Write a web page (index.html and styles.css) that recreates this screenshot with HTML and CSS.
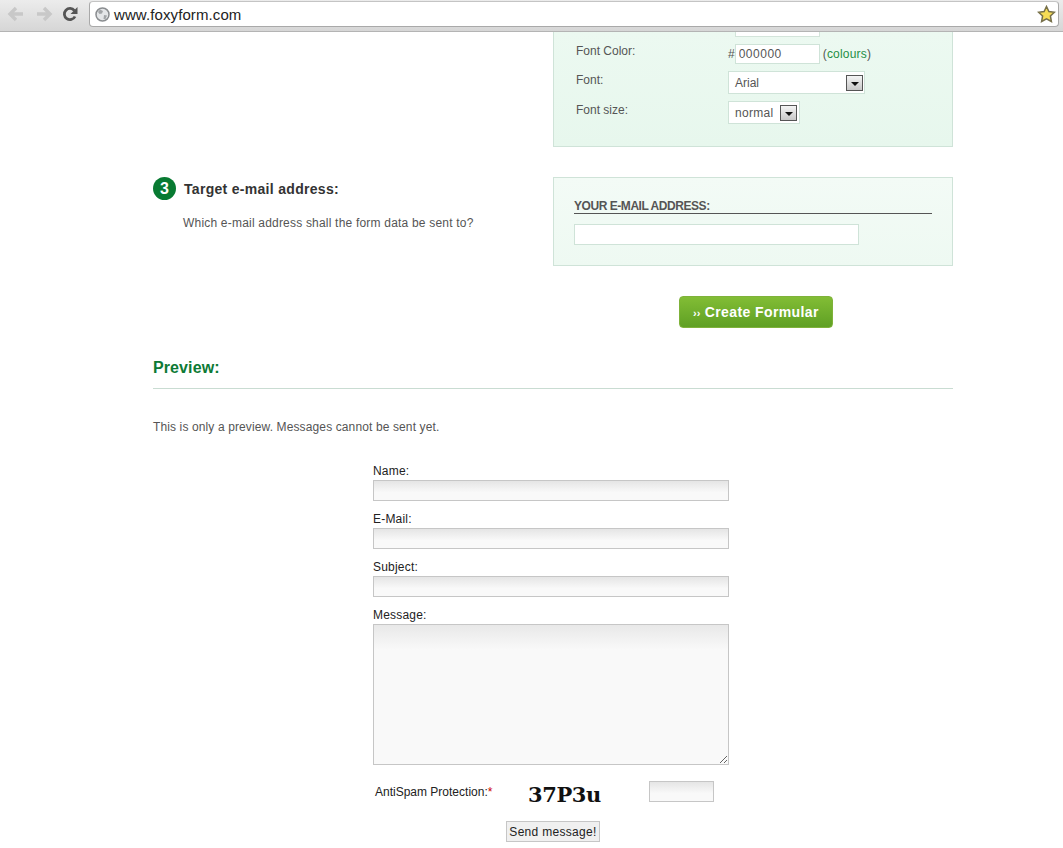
FILE: index.html
```html
<!DOCTYPE html>
<html>
<head>
    <title>foxyform</title>
    <link rel="stylesheet" href="styles.css">
</head>
<body>
    <div id="toolbar">
        <svg class="nav" width="18" height="16" viewBox="0 0 18 16"><path d="M9 2 3 8l6 6M3 8h13" fill="none" stroke="#c8c8c8" stroke-width="3.4"/></svg>
        <svg class="nav" width="18" height="16" viewBox="0 0 18 16"><path d="M9 2l6 6-6 6M15 8H2" fill="none" stroke="#c8c8c8" stroke-width="3.4"/></svg>
        <svg class="nav reload" width="16" height="16" viewBox="0 0 16 16"><path d="M13 10.5A5.6 5.6 0 1 1 12.4 4.6" fill="none" stroke="#555" stroke-width="2.8"/><path d="M15.500 1v7h-7z" fill="#555"/></svg>
        <div id="address">
            <svg class="globe" width="15" height="15" viewBox="0 0 15 15"><circle cx="7.500" cy="7.500" r="6.500" fill="#e4e6e8" stroke="#8a8d90" stroke-width="1.500"/><path d="M5 2.500 8 4 7 6.500 4.500 7 3 5zM9 8l3 .5-1.500 3.500L8.500 12z" fill="#a2a5a8"/></svg>
            <span class="url">www.foxyform.com</span>
            <svg class="star" width="19" height="18" viewBox="0 0 19 18"><path d="M9.500 1.500l2.400 5 5.500.7-4 3.800 1 5.500-4.900-2.700-4.900 2.700 1-5.500-4-3.800 5.500-.7z" fill="#f7dc55" stroke="#77704a" stroke-width="1.500"/></svg>
        </div>
    </div>

    <div id="page">
        <div class="section first">
            <div class="left"></div>
            <div class="panel style-panel">
                <div class="cut-input"></div>
                <div class="row color-row">
                    <label>Font Color:</label>
                    <div class="field">
                        <span class="hash">#</span><input type="text" class="text color-input" value="000000">
                        <span class="colours">(<a>colours</a>)</span>
                    </div>
                </div>
                <div class="row font-row">
                    <label>Font:</label>
                    <div class="select font-select"><span>Arial</span><i class="arrow"></i></div>
                </div>
                <div class="row size-row">
                    <label>Font size:</label>
                    <div class="select size-select"><span>normal</span><i class="arrow"></i></div>
                </div>
            </div>
        </div>

        <div class="section target">
            <div class="left">
                <h3><span class="num">3</span>Target e-mail address:</h3>
                <p>Which e-mail address shall the form data be sent to?</p>
            </div>
            <div class="panel mail-panel">
                <h4>YOUR E-MAIL ADDRESS:</h4>
                <input type="text" class="text mail-input">
            </div>
        </div>

        <div class="create-wrap"><button class="create"><span class="chev">&rsaquo;&rsaquo;</span> Create Formular</button></div>

        <h2>Preview:</h2>
        <p class="note">This is only a preview. Messages cannot be sent yet.</p>

        <form id="preview">
            <label>Name:</label>
            <input type="text" class="grey">
            <label>E-Mail:</label>
            <input type="text" class="grey">
            <label>Subject:</label>
            <input type="text" class="grey">
            <label>Message:</label>
            <textarea class="grey"></textarea>
            <div class="spam">
                <span class="spam-label">AntiSpam Protection:<b>*</b></span>
                <span class="captcha">37P3u</span>
                <input type="text" class="grey spam-input">
            </div>
            <div class="send-wrap"><button type="button" class="send">Send message!</button></div>
        </form>
    </div>
</body>
</html>
```

FILE: styles.css
```css
* {
    box-sizing: border-box;
}
html, body {
    height: 848px;
    overflow: hidden;
}
body {
    margin: 0;
    background-color: #fff;
    font-family: "Liberation Sans", Arial, sans-serif;
    font-size: 12px;
    color: #555;
}

/* browser chrome */
#toolbar {
    display: flex;
    align-items: flex-start;
    height: 32px;
    padding: 1px 4px 0 7px;
    background: linear-gradient(#ececec, #d6d6d6);
    border-bottom: 1px solid #b4b4b4;
}
.nav {
    margin-top: 5px;
    margin-right: 10px;
}
.nav.reload {
    margin-right: 0;
    margin-left: -1px;
}
#address {
    display: flex;
    align-items: center;
    width: 970px;
    height: 26px;
    margin-left: 11px;
    padding: 0 2px 0 5px;
    background-color: #fff;
    border: 1px solid #a9a9a9;
    border-top-color: #c4c4c4;
    border-radius: 4px;
}
.url {
    margin-left: 4px;
    font-size: 15px;
    letter-spacing: 0.1px;
    color: #222;
}
.star {
    margin-left: auto;
}

/* page */
#page {
    width: 800px;
    margin-left: 153px;
}
.section {
    display: flex;
    justify-content: space-between;
}
.left {
    width: 380px;
}
.panel {
    width: 400px;
    border: 1px solid #cfe3d8;
}
.style-panel {
    height: 115px;
    border-top: none;
    background: linear-gradient(#ecf9f1, #e7f7ed);
    padding-left: 22px;
}
.cut-input {
    width: 85px;
    height: 5px;
    margin-left: 159px;
    background-color: #fff;
    border: 1px solid #d3e4da;
    border-top: none;
}
.row {
    display: flex;
    font-size: 12px;
    color: #555;
}
.row label {
    width: 152px;
    line-height: 14px;
}
.color-row {
    height: 20px;
    margin-top: 7px;
}
.font-row,
.size-row {
    height: 23px;
    margin-top: 7px;
}
.font-row label,
.size-row label {
    margin-top: 2px;
}
.hash {
    line-height: 20px;
}
.field {
    display: flex;
}
.text {
    height: 100%;
    padding: 0 2px;
    background-color: #fff;
    border: 1px solid #cfe3d8;
    font-family: "Liberation Sans", Arial, sans-serif;
    font-size: 12px;
    color: #555;
}
.color-input {
    width: 85px;
    padding-left: 3px;
    letter-spacing: 0.5px;
}
.colours {
    margin-left: 3px;
    line-height: 20px;
    letter-spacing: 0.2px;
}
.colours a {
    color: #1f8f45;
}
.select {
    display: flex;
    align-items: center;
    justify-content: space-between;
    height: 23px;
    padding: 0 2px 0 6px;
    background-color: #fff;
    border: 1px solid #cfe3d8;
}
.font-select {
    width: 137px;
    padding-right: 1px;
}
.size-select {
    width: 72px;
    letter-spacing: 0.3px;
}
.arrow {
    position: relative;
    width: 17px;
    height: 16px;
    background: linear-gradient(#f4f4f4, #c8c8c8);
    border: 1px solid #555;
}
.arrow::after {
    content: "";
    position: absolute;
    left: 4px;
    top: 6px;
    border: 4px solid transparent;
    border-top: 4px solid #111;
    border-bottom: none;
}

.target {
    margin-top: 30px;
}
.target h3 {
    display: flex;
    align-items: center;
    height: 23px;
    margin: 0;
    font-size: 14px;
    letter-spacing: 0.3px;
    color: #333;
}
.num {
    width: 23px;
    height: 23px;
    margin-right: 8px;
    border-radius: 50%;
    background-color: #087a32;
    color: #fff;
    font-size: 16px;
    line-height: 23px;
    text-align: center;
    letter-spacing: 0;
}
.target p {
    margin: 16px 0 0 30px;
    line-height: 14px;
    letter-spacing: 0.2px;
}
.mail-panel {
    height: 89px;
    padding: 21px 20px 0;
    background: linear-gradient(#f3fbf6, #eef9f2);
}
.mail-panel h4 {
    margin: 0;
    height: 15px;
    line-height: 14px;
    font-size: 12px;
    letter-spacing: -0.45px;
    color: #555;
    border-bottom: 1px solid #555;
}
.mail-input {
    display: block;
    width: 285px;
    height: 21px;
    margin-top: 10px;
}
.create-wrap {
    margin: 30px 0 0 526px;
}
.create {
    display: block;
    width: 154px;
    height: 32px;
    padding: 0;
    border: 1px solid #7fb23a;
    border-radius: 4px;
    background: linear-gradient(#82bd35, #5fa024);
    font-family: "Liberation Sans", Arial, sans-serif;
    font-size: 14px;
    font-weight: bold;
    letter-spacing: 0.4px;
    color: #fff;
}
.chev {
    font-size: 11px;
    letter-spacing: 0;
}
h2 {
    height: 43px;
    margin: 18px 0 0;
    padding-top: 13px;
    border-bottom: 1px solid #c9dcd2;
    font-size: 16px;
    line-height: 18px;
    letter-spacing: 0.1px;
    color: #0d7a35;
}
.note {
    margin: 31px 0 0;
    line-height: 14px;
    letter-spacing: 0.12px;
}

/* preview form */
#preview {
    width: 356px;
    margin: 30px 0 0 220px;
    color: #222;
}
#preview label {
    display: block;
    height: 14px;
    margin-top: 11px;
    line-height: 14px;
    letter-spacing: 0.2px;
}
#preview label:first-child {
    margin-top: 0;
}
.grey {
    display: block;
    width: 356px;
    height: 21px;
    margin: 0;
    padding: 0;
    border: 1px solid #c6c6c6;
    background: linear-gradient(#e5e5e5, #f9f9f9 60%);
}
#preview .grey {
    margin-top: 2px;
}
textarea.grey {
    height: 141px;
    background: linear-gradient(#e8e8e8, #f9f9f9 18%);
}
.spam {
    display: flex;
    align-items: flex-start;
    height: 40px;
    margin-top: 16px;
    padding-left: 2px;
}
.spam-label {
    width: 153px;
    margin-top: 4px;
    line-height: 14px;
}
.spam-label b {
    font-weight: normal;
    color: #c00;
}
.captcha {
    width: 121px;
    font-family: "DejaVu Serif", serif;
    font-size: 21px;
    line-height: 28px;
    font-weight: bold;
    letter-spacing: -0.4px;
    color: #111;
}
#preview .spam-input {
    width: 65px;
    margin-top: 0;
}
.send-wrap {
    padding-left: 133px;
}
.send {
    display: block;
    width: 94px;
    height: 21px;
    padding: 0;
    border: 1px solid #c6c6c6;
    background-color: #f0f0f0;
    font-family: "Liberation Sans", Arial, sans-serif;
    font-size: 12px;
    letter-spacing: 0.3px;
    color: #222;
}
```
